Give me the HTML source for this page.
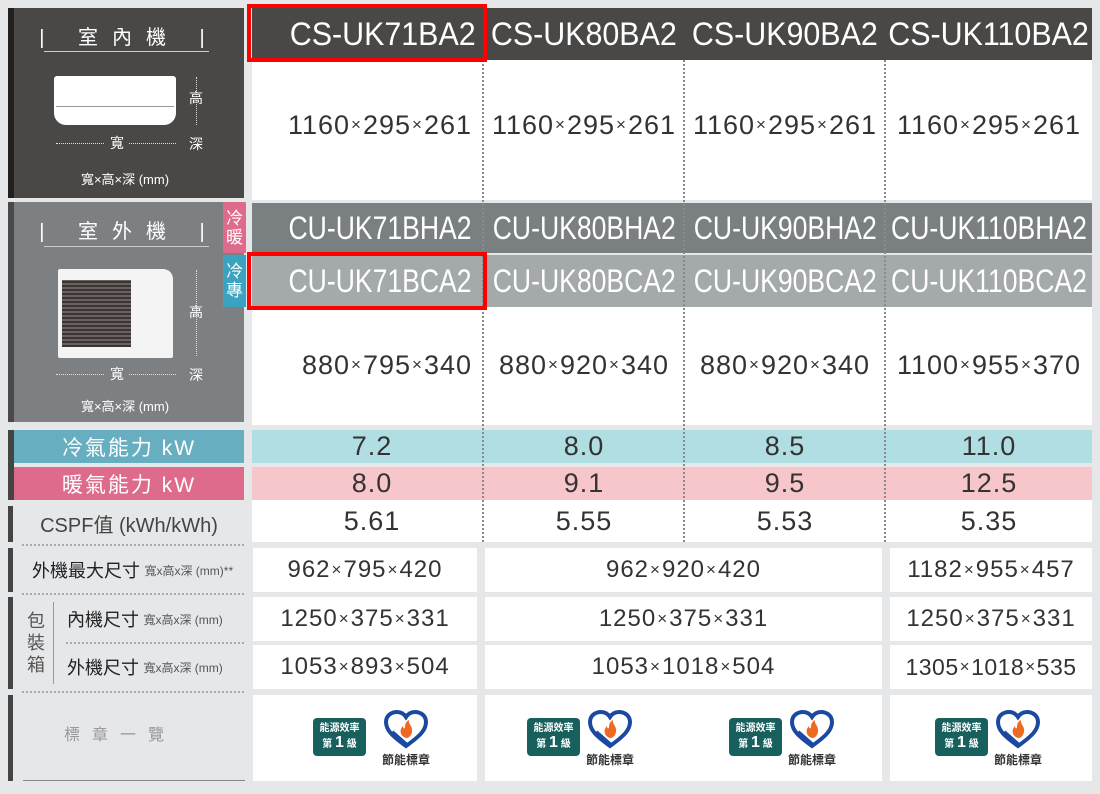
<!DOCTYPE html>
<html><head><meta charset="utf-8"><style>
*{margin:0;padding:0;box-sizing:border-box}
body{width:1100px;height:794px;background:#e6e7e9;position:relative;overflow:hidden;font-family:"Liberation Sans","Noto Sans CJK TC",sans-serif;color:#333}
.a{position:absolute}
.c{position:absolute;display:flex;align-items:center;justify-content:center;white-space:nowrap}
.h{color:#fff;font-family:"Liberation Sans","Noto Sans CJK TC",sans-serif;font-size:32px}
.h span{display:inline-block;transform:scaleX(.95);transform-origin:center}
.h.r span{transform-origin:right center}
.h.n span{transform:scaleX(.83)}
.d{font-size:27px;color:#333;letter-spacing:1px}
.x{font-size:17px;margin:0 1px}
.dl{position:absolute;width:0;border-left:2px dotted #8a8a8a}
.w{background:#fff}
.lbl{font-size:18px;color:#222}
.sm{font-size:12px;color:#555}
.bar{position:absolute;left:8px;width:5px;background:#444}
.hd{position:absolute;height:0;border-top:2px dotted #aaa}
.tag{position:absolute;left:223px;width:23px;color:#fff;font-size:17px;line-height:19px;text-align:center;display:flex;align-items:center;justify-content:center}
.red{position:absolute;border:4px solid #f00}
.badge{display:inline-block;position:relative;width:53px;height:38px;background:#17605e;border-radius:4px;color:#fff;font-size:10px;font-weight:bold;text-align:center;line-height:14px;padding-top:4px;vertical-align:middle}
</style></head><body>

<div class="a" style="left:8px;top:8px;width:236px;height:190px;background:#4a4846"></div>
<div class="a" style="left:8px;top:8px;width:6px;height:190px;background:#231f1f"></div>
<div class="c" style="left:44px;top:20px;width:170px;height:30px;color:#fff;font-size:20px;letter-spacing:14px">| 室內機 |</div>
<div class="a" style="left:44px;top:51px;width:165px;height:1px;background:#ccc"></div>
<div class="a" style="left:54px;top:76px;width:122px;height:49px;background:#fff;border-radius:3px 3px 12px 12px"></div>
<div class="a" style="left:56px;top:106px;width:118px;height:1px;background:#999"></div>
<div class="a" style="left:196px;top:77px;height:48px;border-left:1px dotted #ddd"></div>
<div class="c" style="left:186px;top:88px;width:20px;height:20px;color:#fff;font-size:14px">高</div>
<div class="a" style="left:56px;top:143px;width:120px;border-top:1px dotted #ddd"></div>
<div class="c" style="left:105px;top:134px;width:24px;height:18px;color:#fff;font-size:14px;background:#4a4846">寬</div>
<div class="c" style="left:186px;top:134px;width:20px;height:20px;color:#fff;font-size:14px">深</div>
<div class="c" style="left:60px;top:168px;width:130px;height:20px;color:#fff;font-size:13px">寬×高×深 (mm)</div>

<div class="a" style="left:8px;top:202px;width:236px;height:220px;background:#7d8082"></div>
<div class="a" style="left:8px;top:202px;width:6px;height:220px;background:#4a4a4a"></div>
<div class="c" style="left:44px;top:214px;width:170px;height:30px;color:#fff;font-size:20px;letter-spacing:14px">| 室外機 |</div>
<div class="a" style="left:44px;top:246px;width:165px;height:1px;background:#ccc"></div>
<div class="a" style="left:58px;top:269px;width:115px;height:89px;background:#f4f4f4;border-radius:2px 10px 2px 2px"></div>
<div class="a" style="left:62px;top:280px;width:69px;height:67px;background:repeating-linear-gradient(0deg,#3a3433 0 2px,#6a6260 2px 4px)"></div>
<div class="a" style="left:196px;top:270px;height:86px;border-left:1px dotted #ddd"></div>
<div class="c" style="left:186px;top:302px;width:20px;height:20px;color:#fff;font-size:14px">高</div>
<div class="a" style="left:56px;top:374px;width:120px;border-top:1px dotted #ddd"></div>
<div class="c" style="left:105px;top:365px;width:24px;height:18px;color:#fff;font-size:14px;background:#7d8082">寬</div>
<div class="c" style="left:186px;top:365px;width:20px;height:20px;color:#fff;font-size:14px">深</div>
<div class="c" style="left:60px;top:395px;width:130px;height:20px;color:#fff;font-size:13px">寬×高×深 (mm)</div>
<div class="tag" style="top:202px;height:51px;background:#de6b8c">冷<br>暖</div>
<div class="tag" style="top:255px;height:52px;background:#3ba3c0">冷<br>專</div>

<div class="a" style="left:252px;top:8px;width:840px;height:52px;background:#4a4846"></div>
<div class="a w" style="left:252px;top:60px;width:840px;height:140px"></div>
<div class="a" style="left:252px;top:203px;width:840px;height:50px;background:#7a7f82"></div>
<div class="a" style="left:252px;top:255px;width:840px;height:52px;background:#a4a9ab"></div>
<div class="a w" style="left:252px;top:307px;width:840px;height:118px"></div>
<div class="a" style="left:252px;top:430px;width:840px;height:33px;background:#b0dee3"></div>
<div class="a" style="left:252px;top:467px;width:840px;height:33px;background:#f7c6cb"></div>
<div class="a w" style="left:252px;top:500px;width:840px;height:42px"></div>

<div class="c h r" style="left:262px;top:8px;width:220px;height:52px;justify-content:flex-end;padding-right:6px"><span>CS-UK71BA2</span></div>
<div class="c h" style="left:484px;top:8px;width:200px;height:52px"><span>CS-UK80BA2</span></div>
<div class="c h" style="left:685px;top:8px;width:200px;height:52px"><span>CS-UK90BA2</span></div>
<div class="c h" style="left:886px;top:8px;width:206px;height:52px"><span>CS-UK110BA2</span></div>

<div class="c d" style="left:262px;top:100px;width:220px;height:50px;justify-content:flex-end;padding-right:10px">1160<span class="x">×</span>295<span class="x">×</span>261</div>
<div class="c d" style="left:484px;top:100px;width:200px;height:50px">1160<span class="x">×</span>295<span class="x">×</span>261</div>
<div class="c d" style="left:685px;top:100px;width:200px;height:50px">1160<span class="x">×</span>295<span class="x">×</span>261</div>
<div class="c d" style="left:886px;top:100px;width:206px;height:50px">1160<span class="x">×</span>295<span class="x">×</span>261</div>

<div class="c h r n" style="left:262px;top:203px;width:220px;height:50px;justify-content:flex-end;padding-right:10px"><span>CU-UK71BHA2</span></div>
<div class="c h n" style="left:484px;top:203px;width:200px;height:50px"><span>CU-UK80BHA2</span></div>
<div class="c h n" style="left:685px;top:203px;width:200px;height:50px"><span>CU-UK90BHA2</span></div>
<div class="c h n" style="left:886px;top:203px;width:206px;height:50px"><span>CU-UK110BHA2</span></div>
<div class="c h r n" style="left:262px;top:255px;width:220px;height:52px;justify-content:flex-end;padding-right:10px"><span>CU-UK71BCA2</span></div>
<div class="c h n" style="left:484px;top:255px;width:200px;height:52px"><span>CU-UK80BCA2</span></div>
<div class="c h n" style="left:685px;top:255px;width:200px;height:52px"><span>CU-UK90BCA2</span></div>
<div class="c h n" style="left:886px;top:255px;width:206px;height:52px"><span>CU-UK110BCA2</span></div>

<div class="c d" style="left:262px;top:340px;width:220px;height:50px;justify-content:flex-end;padding-right:10px">880<span class="x">×</span>795<span class="x">×</span>340</div>
<div class="c d" style="left:484px;top:340px;width:200px;height:50px">880<span class="x">×</span>920<span class="x">×</span>340</div>
<div class="c d" style="left:685px;top:340px;width:200px;height:50px">880<span class="x">×</span>920<span class="x">×</span>340</div>
<div class="c d" style="left:886px;top:340px;width:206px;height:50px">1100<span class="x">×</span>955<span class="x">×</span>370</div>

<div class="c d" style="left:262px;top:430px;width:220px;height:33px">7.2</div>
<div class="c d" style="left:484px;top:430px;width:200px;height:33px">8.0</div>
<div class="c d" style="left:685px;top:430px;width:200px;height:33px">8.5</div>
<div class="c d" style="left:886px;top:430px;width:206px;height:33px">11.0</div>
<div class="c d" style="left:262px;top:467px;width:220px;height:33px">8.0</div>
<div class="c d" style="left:484px;top:467px;width:200px;height:33px">9.1</div>
<div class="c d" style="left:685px;top:467px;width:200px;height:33px">9.5</div>
<div class="c d" style="left:886px;top:467px;width:206px;height:33px">12.5</div>
<div class="c d" style="left:262px;top:500px;width:220px;height:42px">5.61</div>
<div class="c d" style="left:484px;top:500px;width:200px;height:42px">5.55</div>
<div class="c d" style="left:685px;top:500px;width:200px;height:42px">5.53</div>
<div class="c d" style="left:886px;top:500px;width:206px;height:42px">5.35</div>

<div class="dl" style="left:482px;top:60px;height:482px"></div>
<div class="dl" style="left:683px;top:60px;height:482px"></div>
<div class="dl" style="left:884px;top:60px;height:482px"></div>

<div class="red" style="left:247px;top:4px;width:240px;height:58px"></div>
<div class="red" style="left:247px;top:252px;width:240px;height:58px"></div>

<div class="a" style="left:8px;top:430px;width:6px;height:70px;background:#444"></div>
<div class="c" style="left:14px;top:430px;width:230px;height:33px;background:#67afc0;color:#fff;font-size:21px;letter-spacing:2px">冷氣能力 kW</div>
<div class="c" style="left:14px;top:467px;width:230px;height:33px;background:#de6b8c;color:#fff;font-size:21px;letter-spacing:2px">暖氣能力 kW</div>
<div class="bar" style="top:506px;height:36px"></div>
<div class="c" style="left:14px;top:506px;width:230px;height:34px;font-size:20px;color:#444">CSPF值 (kWh/kWh)</div>
<div class="hd" style="left:22px;top:544px;width:222px"></div>
<div class="bar" style="top:548px;height:44px"></div>
<div class="c" style="left:32px;top:548px;width:212px;height:44px;justify-content:flex-start"><span class="lbl">外機最大尺寸</span>&nbsp;<span class="sm">寬x高x深 (mm)**</span></div>
<div class="hd" style="left:22px;top:593px;width:222px"></div>
<div class="bar" style="top:597px;height:92px"></div>
<div class="c" style="left:25px;top:597px;width:22px;height:92px;font-size:18px;line-height:22px;color:#555;text-align:center">包<br>裝<br>箱</div>
<div class="a" style="left:53px;top:602px;width:1px;height:82px;background:#999"></div>
<div class="c" style="left:67px;top:597px;width:178px;height:44px;justify-content:flex-start"><span class="lbl">內機尺寸</span>&nbsp;<span class="sm">寬x高x深 (mm)</span></div>
<div class="hd" style="left:66px;top:642px;width:178px"></div>
<div class="c" style="left:67px;top:645px;width:178px;height:44px;justify-content:flex-start"><span class="lbl">外機尺寸</span>&nbsp;<span class="sm">寬x高x深 (mm)</span></div>
<div class="hd" style="left:22px;top:691px;width:222px"></div>
<div class="bar" style="top:695px;height:86px"></div>
<div class="c" style="left:60px;top:715px;width:120px;height:36px;font-size:16px;color:#999;letter-spacing:12px">標章一覽</div>
<div class="a" style="left:23px;top:780px;width:222px;height:1px;background:#888"></div>

<div class="c d w" style="left:253px;top:548px;width:224px;height:44px;font-size:24px">962<span class="x">×</span>795<span class="x">×</span>420</div>
<div class="c d w" style="left:485px;top:548px;width:397px;height:44px;font-size:24px">962<span class="x">×</span>920<span class="x">×</span>420</div>
<div class="c d w" style="left:890px;top:548px;width:202px;height:44px;font-size:24px">1182<span class="x">×</span>955<span class="x">×</span>457</div>
<div class="c d w" style="left:253px;top:597px;width:224px;height:44px;font-size:24px">1250<span class="x">×</span>375<span class="x">×</span>331</div>
<div class="c d w" style="left:485px;top:597px;width:397px;height:44px;font-size:24px">1250<span class="x">×</span>375<span class="x">×</span>331</div>
<div class="c d w" style="left:890px;top:597px;width:202px;height:44px;font-size:24px">1250<span class="x">×</span>375<span class="x">×</span>331</div>
<div class="c d w" style="left:253px;top:645px;width:224px;height:44px;font-size:24px">1053<span class="x">×</span>893<span class="x">×</span>504</div>
<div class="c d w" style="left:485px;top:645px;width:397px;height:44px;font-size:24px">1053<span class="x">×</span>1018<span class="x">×</span>504</div>
<div class="c d w" style="left:890px;top:645px;width:202px;height:44px;font-size:23px;letter-spacing:0.5px">1305<span class="x">×</span>1018<span class="x">×</span>535</div>
<div class="a w" style="left:253px;top:695px;width:224px;height:86px"></div>
<div class="a w" style="left:485px;top:695px;width:397px;height:86px"></div>
<div class="a w" style="left:890px;top:695px;width:202px;height:86px"></div>

<div class="a" style="left:313px;top:718px"><div class="badge">能源效率<br>第 <span style="font-size:16px">1</span> 級</div></div>
<div class="a" style="left:382px;top:710px;width:70px;height:60px">
<svg width="48" height="40" viewBox="0 0 48 40"><path d="M24 36 C10 26 4 20 4 12 C4 5 10 2 15 2 C19 2 22 4 24 7 C26 4 29 2 33 2 C38 2 44 5 44 12 C44 20 38 26 24 36Z" fill="none" stroke="#1b48a0" stroke-width="4"/><path d="M24 28 C18 26 17 20 21 16 C21 19 23 19 23 17 C23 13 25 11 27 10 C26 14 31 16 30 22 C29 26 27 28 24 28Z" fill="#ef6a20"/><path d="M10 22 L26 36" stroke="#1b48a0" stroke-width="4"/></svg>
<div style="font-size:12px;font-weight:bold;color:#333;margin-top:-4px">節能標章</div></div>

<div class="a" style="left:527px;top:718px"><div class="badge">能源效率<br>第 <span style="font-size:16px">1</span> 級</div></div>
<div class="a" style="left:586px;top:710px;width:70px;height:60px">
<svg width="48" height="40" viewBox="0 0 48 40"><path d="M24 36 C10 26 4 20 4 12 C4 5 10 2 15 2 C19 2 22 4 24 7 C26 4 29 2 33 2 C38 2 44 5 44 12 C44 20 38 26 24 36Z" fill="none" stroke="#1b48a0" stroke-width="4"/><path d="M24 28 C18 26 17 20 21 16 C21 19 23 19 23 17 C23 13 25 11 27 10 C26 14 31 16 30 22 C29 26 27 28 24 28Z" fill="#ef6a20"/><path d="M10 22 L26 36" stroke="#1b48a0" stroke-width="4"/></svg>
<div style="font-size:12px;font-weight:bold;color:#333;margin-top:-4px">節能標章</div></div>

<div class="a" style="left:729px;top:718px"><div class="badge">能源效率<br>第 <span style="font-size:16px">1</span> 級</div></div>
<div class="a" style="left:788px;top:710px;width:70px;height:60px">
<svg width="48" height="40" viewBox="0 0 48 40"><path d="M24 36 C10 26 4 20 4 12 C4 5 10 2 15 2 C19 2 22 4 24 7 C26 4 29 2 33 2 C38 2 44 5 44 12 C44 20 38 26 24 36Z" fill="none" stroke="#1b48a0" stroke-width="4"/><path d="M24 28 C18 26 17 20 21 16 C21 19 23 19 23 17 C23 13 25 11 27 10 C26 14 31 16 30 22 C29 26 27 28 24 28Z" fill="#ef6a20"/><path d="M10 22 L26 36" stroke="#1b48a0" stroke-width="4"/></svg>
<div style="font-size:12px;font-weight:bold;color:#333;margin-top:-4px">節能標章</div></div>

<div class="a" style="left:935px;top:718px"><div class="badge">能源效率<br>第 <span style="font-size:16px">1</span> 級</div></div>
<div class="a" style="left:994px;top:710px;width:70px;height:60px">
<svg width="48" height="40" viewBox="0 0 48 40"><path d="M24 36 C10 26 4 20 4 12 C4 5 10 2 15 2 C19 2 22 4 24 7 C26 4 29 2 33 2 C38 2 44 5 44 12 C44 20 38 26 24 36Z" fill="none" stroke="#1b48a0" stroke-width="4"/><path d="M24 28 C18 26 17 20 21 16 C21 19 23 19 23 17 C23 13 25 11 27 10 C26 14 31 16 30 22 C29 26 27 28 24 28Z" fill="#ef6a20"/><path d="M10 22 L26 36" stroke="#1b48a0" stroke-width="4"/></svg>
<div style="font-size:12px;font-weight:bold;color:#333;margin-top:-4px">節能標章</div></div>

</body></html>
